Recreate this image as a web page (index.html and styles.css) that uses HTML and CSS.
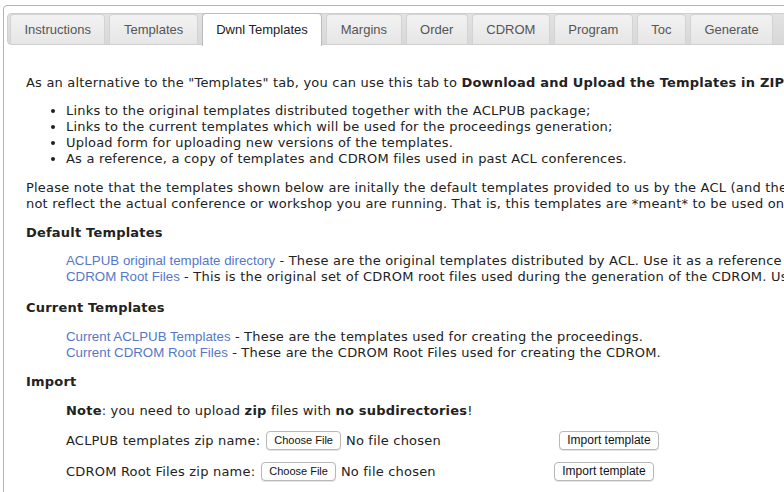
FILE: index.html
```html
<!DOCTYPE html>
<html>
<head>
<meta charset="utf-8">
<link rel="stylesheet" href="styles.css">
</head>
<body>
<div class="tabs">
  <ul class="tab-nav">
    <li class="tab">Instructions</li>
    <li class="tab">Templates</li>
    <li class="tab active">Dwnl Templates</li>
    <li class="tab">Margins</li>
    <li class="tab">Order</li>
    <li class="tab">CDROM</li>
    <li class="tab">Program</li>
    <li class="tab">Toc</li>
    <li class="tab">Generate</li>
  </ul>
  <div class="panel">
    <p class="intro">As an alternative to the "Templates" tab, you can use this tab to <b>Download and Upload the Templates in ZIP format</b>. You will find:</p>
    <ul class="bullets">
      <li>Links to the original templates distributed together with the ACLPUB package;</li>
      <li>Links to the current templates which will be used for the proceedings generation;</li>
      <li>Upload form for uploading new versions of the templates.</li>
      <li>As a reference, a copy of templates and CDROM files used in past ACL conferences.</li>
    </ul>
    <p>Please note that the templates shown below are initally the default templates provided to us by the ACL (and they might<br>not reflect the actual conference or workshop you are running. That is, this templates are *meant* to be used only as a starting point.</p>
    <h3>Default Templates</h3>
    <div class="links">
      <a href="#">ACLPUB original template directory</a> - These are the original templates distributed by ACL. Use it as a reference only.<br>
      <a href="#">CDROM Root Files</a> - This is the original set of CDROM root files used during the generation of the CDROM. Use it as a reference only.
    </div>
    <h3 class="gap">Current Templates</h3>
    <div class="links">
      <a href="#">Current ACLPUB Templates</a> - These are the templates used for creating the proceedings.<br>
      <a href="#">Current CDROM Root Files</a> - These are the CDROM Root Files used for creating the CDROM.
    </div>
    <h3>Import</h3>
    <div class="import">
      <p class="note"><b>Note</b>: you need to upload <b>zip</b> files with <b>no subdirectories</b>!</p>
      <div class="row">
        <span class="label">ACLPUB templates zip name:</span>
        <span class="file"><span class="btn choose">Choose File</span><span class="nofile">No file chosen</span></span>
        <span class="btn submit">Import template</span>
      </div>
      <div class="row">
        <span class="label">CDROM Root Files zip name:</span>
        <span class="file"><span class="btn choose">Choose File</span><span class="nofile">No file chosen</span></span>
        <span class="btn submit">Import template</span>
      </div>
    </div>
  </div>
</div>
</body>
</html>
```

FILE: styles.css
```css
html, body {
  margin: 0;
  padding: 0;
  overflow: hidden;
  background: #fff;
}
body {
  width: 784px;
  height: 492px;
}
.tabs {
  margin: 5px 0 0 3px;
  width: 1100px;
  border: 1px solid #b3b3b3;
  border-radius: 4px;
  padding: 7px 3px 0 3px;
  height: 600px;
}
.tab-nav {
  list-style: none;
  margin: 0;
  padding: 0 3px 0 2px;
  display: flex;
  gap: 4px;
  align-items: flex-end;
  height: 30px;
  border: 1px solid #cfcfcf;
  border-radius: 4px;
  background: linear-gradient(#e2e2e2, #d8d8d8);
}
.tab {
  font-family: "Liberation Sans", Arial, sans-serif;
  font-size: 13px;
  color: #555;
  padding: 0 13.5px;
  height: 29px;
  line-height: 29px;
  border: 1px solid #d3d3d3;
  border-bottom: none;
  border-radius: 4px 4px 0 0;
  background: linear-gradient(#f2f2f2, #e6e6e6);
}
.tab.active {
  background: #fff;
  color: #222;
  border-color: #bbb;
  height: 32px;
  line-height: 31px;
  margin-bottom: -2px;
}
.panel {
  padding: 0 0 0 19px;
  font-family: "DejaVu Sans", Verdana, sans-serif;
  font-size: 13px;
  letter-spacing: 0.2px;
  line-height: 16px;
  color: #222;
}
.panel p {
  margin: 13px 0;
}
.panel p.intro {
  margin: 30px 0 12px;
}
.bullets {
  margin: 12px 0;
  padding-left: 40px;
}
h3 {
  font-size: 13px;
  margin: 13px 0 12px;
  line-height: 16px;
}
h3.gap {
  margin-top: 15px;
  margin-bottom: 13px;
}
.links {
  margin-left: 40px;
}
.links a {
  font-family: "Liberation Sans", Arial, sans-serif;
  font-size: 13.3px;
  letter-spacing: 0;
  color: #5677c8;
  text-decoration: none;
}
.import {
  margin-left: 40px;
}
.panel .import .note {
  margin: 13px 0 6px;
}
.row {
  display: flex;
  align-items: center;
  height: 31px;
}
.label {
  margin-right: 6px;
}
.file {
  display: flex;
  align-items: center;
  width: 293px;
}
.nofile {
  margin-left: 5px;
}
.btn {
  display: inline-block;
  font-family: "Liberation Sans", Arial, sans-serif;
  font-size: 12px;
  letter-spacing: 0;
  color: #111;
  background: #fff;
  border: 1px solid #b8b8b8;
  border-radius: 4px;
  height: 17px;
  line-height: 17px;
  padding: 0 7px;
  box-shadow: 0 1px 0 #e6e6e6;
}
.btn.choose {
  font-size: 11px;
}
```
